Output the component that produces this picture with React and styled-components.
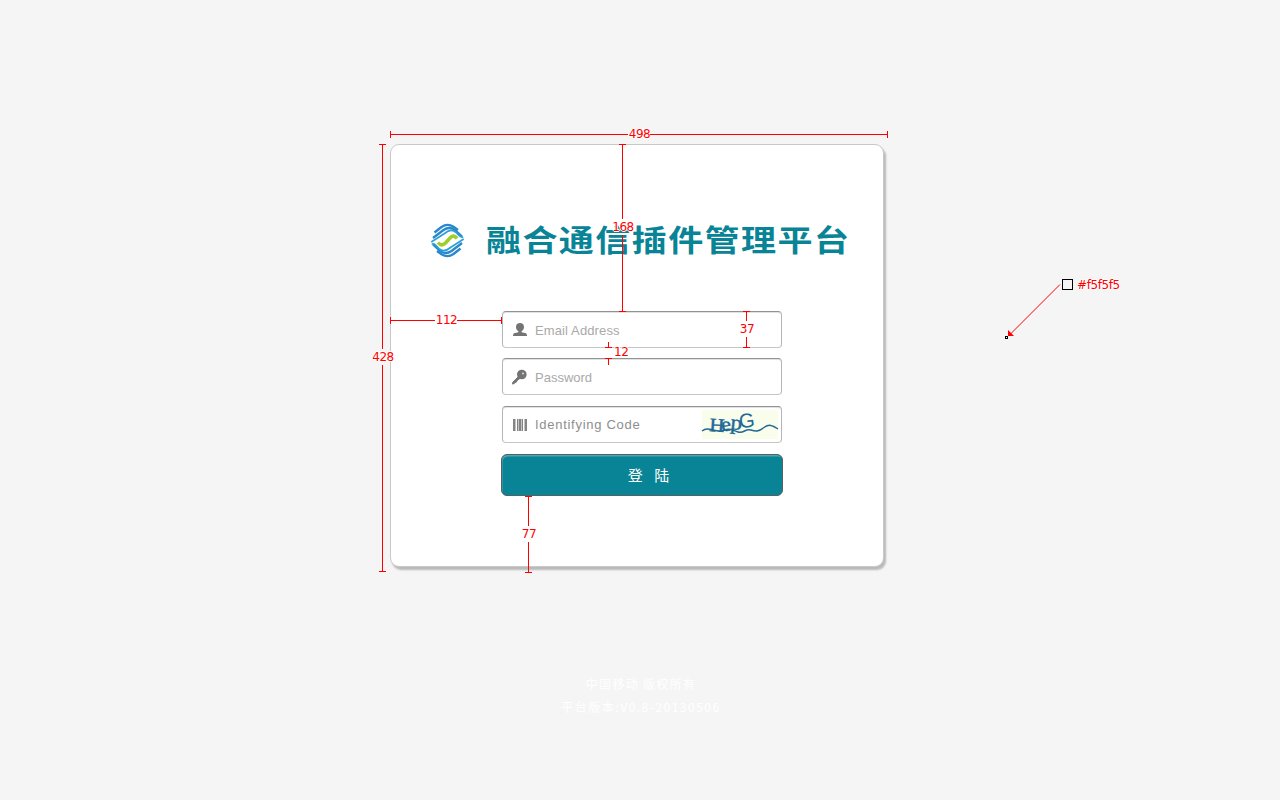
import React from 'react';
import styled, { createGlobalStyle, css } from 'styled-components';

const Global = createGlobalStyle`
  * { box-sizing: border-box; }
  body { margin: 0; background: #f5f5f5; overflow: hidden; }
`;

const Page = styled.main`
  position: relative;
  width: 1280px;
  height: 800px;
  padding-top: 144px;
  background: #f5f5f5;
  font-family: 'Liberation Sans', 'Noto Sans CJK SC', sans-serif;
`;

const Card = styled.section`
  width: 494px;
  height: 423px;
  margin-left: 390px;
  padding-top: 76px;
  background: #fff;
  border: 1px solid #c9c9c9;
  border-radius: 9px;
  box-shadow: 2px 3px 2px #b9b9b9;
`;

const Header = styled.header`
  display: flex;
  align-items: center;
  height: 40px;
  padding-left: 39px;
`;

const Title = styled.h1`
  margin: -6px 0 0 21px;
  font: 700 32.5px/40px 'Noto Sans CJK SC', sans-serif;
  letter-spacing: 1.3px;
  color: #088496;
  white-space: nowrap;
  transform: scale(1.078, 0.92);
  transform-origin: left center;
`;

const Form = styled.form`
  display: flex;
  flex-direction: column;
  width: 280px;
  margin: 50px 0 0 111px;
`;

const Field = styled.label`
  display: flex;
  align-items: center;
  height: 37px;
  margin-bottom: ${(p) => p.$gap}px;
  padding: 0 3px 0 10px;
  border: 1px solid #b5b5b5;
  border-top-color: #929292;
  border-bottom-color: #c6c6c6;
  border-radius: 4px;
  background: #fff;
  box-shadow: inset 0 1px 0 #e2e2e2;
`;

const Placeholder = styled.span`
  flex: 1;
  margin: ${(p) => p.$drop}px 0 0 8px;
  font-size: 13px;
  line-height: 16px;
  color: ${(p) => p.$color};
  letter-spacing: ${(p) => p.$spacing}px;
  white-space: nowrap;
`;

const Submit = styled.button`
  width: 282px;
  height: 42px;
  margin-left: -1px;
  padding: 0 0 0 13px;
  border: 1px solid #565f61;
  border-radius: 6px;
  background: #088496;
  box-shadow: inset 1px 2px 0 -0.5px #4aa8b3;
  color: #fff;
  font: 15px/20px 'Noto Sans CJK SC', sans-serif;
  word-spacing: 8px;
  white-space: pre;
`;

const Footer = styled.footer`
  margin: 105px 0 0 2px;
  text-align: center;
  color: #fff;
  font: 12px/23px 'Noto Sans CJK SC', sans-serif;
`;

const FooterLine = styled.div`
  letter-spacing: ${(p) => p.$spacing}px;
`;

const Mark = styled.div`
  position: absolute;
  left: ${(p) => p.$x}px;
  top: ${(p) => p.$y}px;
  display: flex;
  align-items: center;
  ${(p) =>
    p.$vertical
      ? css`flex-direction: column; width: 7px; height: ${p.$length}px;`
      : css`height: 7px; width: ${p.$length}px;`}
`;

const Tick = styled.i`
  flex: none;
  background: #f00;
  ${(p) => (p.$vertical ? css`width: 7px; height: 1px;` : css`width: 1px; height: 7px;`)}
`;

const Rule = styled.i`
  background: #f00;
  ${(p) => (p.$size ? css`flex: 0 0 ${p.$size}px;` : css`flex: 1;`)}
  ${(p) => (p.$vertical ? css`width: 1px;` : css`height: 1px;`)}
`;

const Value = styled.span`
  flex: none;
  color: #f00;
  font: 12px/16px 'DejaVu Sans', sans-serif;
  letter-spacing: -0.4px;
  white-space: nowrap;
  text-align: center;
  text-shadow: 1px 0 #fff, -1px 0 #fff, 0 1px #fff, 0 -1px #fff;
  ${(p) => (p.$vertical ? css`padding-left: 1px;` : css`padding: 0 0 2px 1px;`)}
`;

const FloatingValue = styled(Value)`
  position: absolute;
  left: ${(p) => p.$x}px;
  top: ${(p) => p.$y}px;
  padding: 0;
`;

const Swatch = styled.svg`
  position: absolute;
  left: 1000px;
  top: 274px;
`;

const Measure = ({ x, y, length, vertical, lead, children }) => (
  <Mark $x={x} $y={y} $length={length} $vertical={vertical}>
    <Tick $vertical={vertical} />
    <Rule $vertical={vertical} $size={lead} />
    <Value $vertical={vertical}>{children}</Value>
    <Rule $vertical={vertical} />
    <Tick $vertical={vertical} />
  </Mark>
);

const LogoHalf = () => (
  <>
    <path d="M4.500 9.500L11.500 4Q17.500 0 23.500 3.800L28 7" stroke="#2788cb" />
    <path d="M3 15L13.500 7Q19.500 3 25 7.200L32 13.500" stroke="#2788cb" />
    <path d="M1.300 19L14.500 10.500Q21 5 26 9.300L29.500 13Q31 14.500 33.300 14" stroke="#2e9fd6" strokeWidth="1.700" />
  </>
);

const Logo = () => (
  <svg width="35" height="36" viewBox="0 0 35 36" fill="none" strokeWidth="2.3" strokeLinejoin="round">
    <LogoHalf />
    <g transform="rotate(180 17.500 17.500)">
      <LogoHalf />
    </g>
    <path d="M8 19.500Q11.500 24 15.500 20L20 15Q24 11 27 15.500" stroke="#a0cf2c" strokeWidth="3.600" />
  </svg>
);

const UserIcon = () => (
  <svg width="14" height="14" viewBox="0 0 14 14" fill="#747474">
    <path d="M7 0C4.700 0 3 1.600 3 4C3 6 4.200 7.600 5.400 8.300V9.200L1 10.300Q0 11 0 13H14Q14 11 13 10.300L8.600 9.200V8.300C9.800 7.600 11 6 11 4C11 1.600 9.300 0 7 0Z" />
  </svg>
);

const KeyIcon = () => (
  <svg width="14" height="16" viewBox="1 0 14 16" overflow="visible">
    <path d="M7 7L.8 13.200L.5 15L2 14.800L3 13.500L4.500 13L5 11.500L8.500 9Z" fill="#747474" stroke="#747474" />
    <circle cx="9.800" cy="5.500" r="4.800" fill="#747474" />
    <circle cx="11" cy="4.500" r="1" fill="#ddd" />
  </svg>
);

const CodeIcon = () => (
  <svg width="14" height="12" viewBox="0 0 14 12" fill="#858585">
    <path d="M0 0H2V12H0ZM4 0H5V12H4ZM6 0H8V12H6ZM9 0H10V12H9ZM12 0H14V12H12Z" />
    <path d="M2 0H3V12H2ZM5 0H6V12H5ZM8 0H9V12H8ZM11 0H12V12H11Z" opacity=".5" />
  </svg>
);

const Captcha = () => (
  <svg width="76" height="29" viewBox="0 0 76 29" overflow="visible">
    <rect width="76" height="29" fill="#f8fdec" />
    <g fill="#216894" stroke="#216894" strokeWidth=".4" fontFamily="Liberation Serif, serif">
      <text transform="translate(7 21) rotate(4) scale(1.1 1)" fontSize="19">H</text>
      <text transform="translate(20 21.500) rotate(-8) scale(1.1 1)" fontSize="20">e</text>
      <text transform="translate(28 19) rotate(6) scale(1.1 1)" fontSize="21">p</text>
      <text transform="translate(38 18.500) rotate(-8)" fontSize="20" fontFamily="Liberation Sans, sans-serif" stroke="none">G</text>
    </g>
    <path d="M0 21C4 18 7 19 11 20S18 22 23 20S30 20 36 22S43 18 49 20S57 21 62 17.500S70 15 76 19" fill="none" stroke="#216894" strokeWidth="1.500" />
  </svg>
);

export default function App() {
  return (
    <>
      <Global />
      <Page>
        <Card>
          <Header>
            <Logo />
            <Title>融合通信插件管理平台</Title>
          </Header>
          <Form>
            <Field $gap={10}>
              <UserIcon />
              <Placeholder $color="#a9a9a9" $spacing={0.12} $drop={3}>Email Address</Placeholder>
            </Field>
            <Field $gap={11}>
              <KeyIcon />
              <Placeholder $color="#a9a9a9" $spacing={0} $drop={3}>Password</Placeholder>
            </Field>
            <Field $gap={11}>
              <CodeIcon />
              <Placeholder $color="#8e8e8e" $spacing={0.72} $drop={1}>Identifying Code</Placeholder>
              <Captcha />
            </Field>
            <Submit type="button">登 陆</Submit>
          </Form>
        </Card>
        <Footer>
          <FooterLine $spacing={1.3}>中国移动 版权所有</FooterLine>
          <FooterLine $spacing={1.5}>平台版本:V0.8-20130506</FooterLine>
        </Footer>

        <Measure x={390} y={131} length={498}>498</Measure>
        <Measure x={379} y={144} length={428} lead={204} vertical>428</Measure>
        <Measure x={619} y={144} length={168} lead={74} vertical>168</Measure>
        <Measure x={390} y={317} length={112}>112</Measure>
        <Measure x={743} y={311} length={37} lead={9} vertical>37</Measure>
        <Measure x={525} y={496} length={77} lead={29} vertical>77</Measure>
        <Mark $x={605} $y={342} $length={6} $vertical>
          <Rule $vertical />
          <Tick $vertical />
        </Mark>
        <Mark $x={605} $y={358} $length={7} $vertical>
          <Tick $vertical />
          <Rule $vertical />
        </Mark>
        <FloatingValue $x={614} $y={344}>12</FloatingValue>
        <Swatch width="76" height="68" viewBox="0 0 76 68">
          <path d="M60 10.500L10 60.500" stroke="#f00" strokeWidth="1" />
          <path d="M8 56L14 62H8Z" fill="#f00" />
          <rect x="62.500" y="5.500" width="10" height="10" fill="#f5f5f5" stroke="#000" />
          <rect x="5.500" y="62.500" width="2" height="2" fill="#fff" stroke="#000" />
        </Swatch>
        <FloatingValue $x={1077} $y={277}>#f5f5f5</FloatingValue>
      </Page>
    </>
  );
}
